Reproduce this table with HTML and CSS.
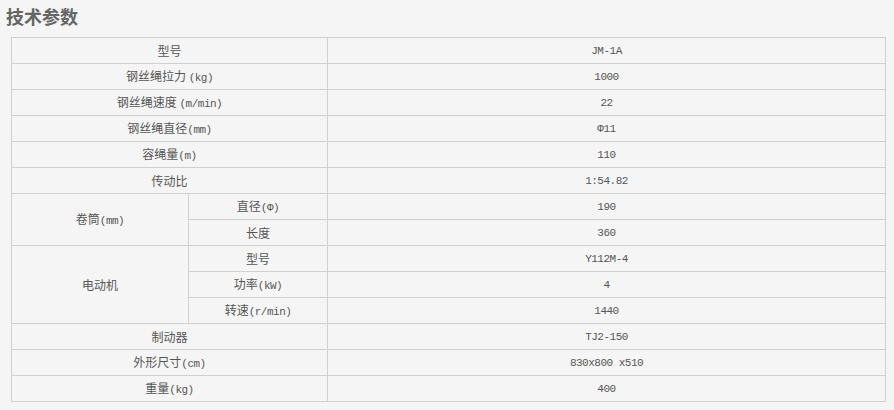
FILE: index.html
```html
<!DOCTYPE html>
<html lang="zh">
<head>
<meta charset="utf-8">
<title>技术参数</title>
<link rel="stylesheet" href="styles.css">
</head>
<body>
<h2 class="title">技术参数</h2>
<table class="spec">
<colgroup><col class="c1"><col class="c2"><col class="c3"></colgroup>
<tbody>
<tr><td colspan="2">型号</td><td class="v">JM-1A</td></tr>
<tr><td colspan="2">钢丝绳拉力 <span class="u">(kg)</span></td><td class="v">1000</td></tr>
<tr><td colspan="2">钢丝绳速度 <span class="u">(m/min)</span></td><td class="v">22</td></tr>
<tr><td colspan="2">钢丝绳直径<span class="u">(mm)</span></td><td class="v">Φ11</td></tr>
<tr><td colspan="2">容绳量<span class="u">(m)</span></td><td class="v">110</td></tr>
<tr><td colspan="2">传动比</td><td class="v">1:54.82</td></tr>
<tr><td rowspan="2">卷筒<span class="u">(mm)</span></td><td>直径<span class="u">(Φ)</span></td><td class="v">190</td></tr>
<tr><td>长度</td><td class="v">360</td></tr>
<tr><td rowspan="3">电动机</td><td>型号</td><td class="v">Y112M-4</td></tr>
<tr><td>功率<span class="u">(kW)</span></td><td class="v">4</td></tr>
<tr><td>转速<span class="u">(r/min)</span></td><td class="v">1440</td></tr>
<tr><td colspan="2">制动器</td><td class="v">TJ2-150</td></tr>
<tr><td colspan="2">外形尺寸<span class="u">(cm)</span></td><td class="v">830x800 x510</td></tr>
<tr><td colspan="2">重量<span class="u">(kg)</span></td><td class="v">400</td></tr>
</tbody>
</table>
</body>
</html>
```
FILE: styles.css
```css
html, body {
  margin: 0;
  padding: 0;
  background: #f5f5f5;
}
body {
  font-family: "Noto Sans CJK SC", "Noto Sans", sans-serif;
  color: #555;
}
.title {
  margin: 0;
  padding: 5px 0 10px 6px;
  font-size: 18px;
  line-height: 22px;
  font-weight: bold;
  color: #666;
}
.spec {
  margin-left: 11px;
  width: 874px;
  border-collapse: collapse;
  table-layout: fixed;
  font-size: 12px;
}
.c1 { width: 177px; }
.c2 { width: 139px; }
.c3 { width: 558px; }
.spec td {
  border: 1px solid #d0d0d0;
  height: 25px;
  padding: 0;
  line-height: 14px;
  vertical-align: middle;
  text-align: center;
  background: #f5f5f5;
  white-space: nowrap;
}
.u, .v {
  font-family: "Liberation Mono", "DejaVu Sans Mono", monospace;
  font-size: 11px;
  letter-spacing: -0.5px;
}
.u {
  line-height: 1;
}
```
